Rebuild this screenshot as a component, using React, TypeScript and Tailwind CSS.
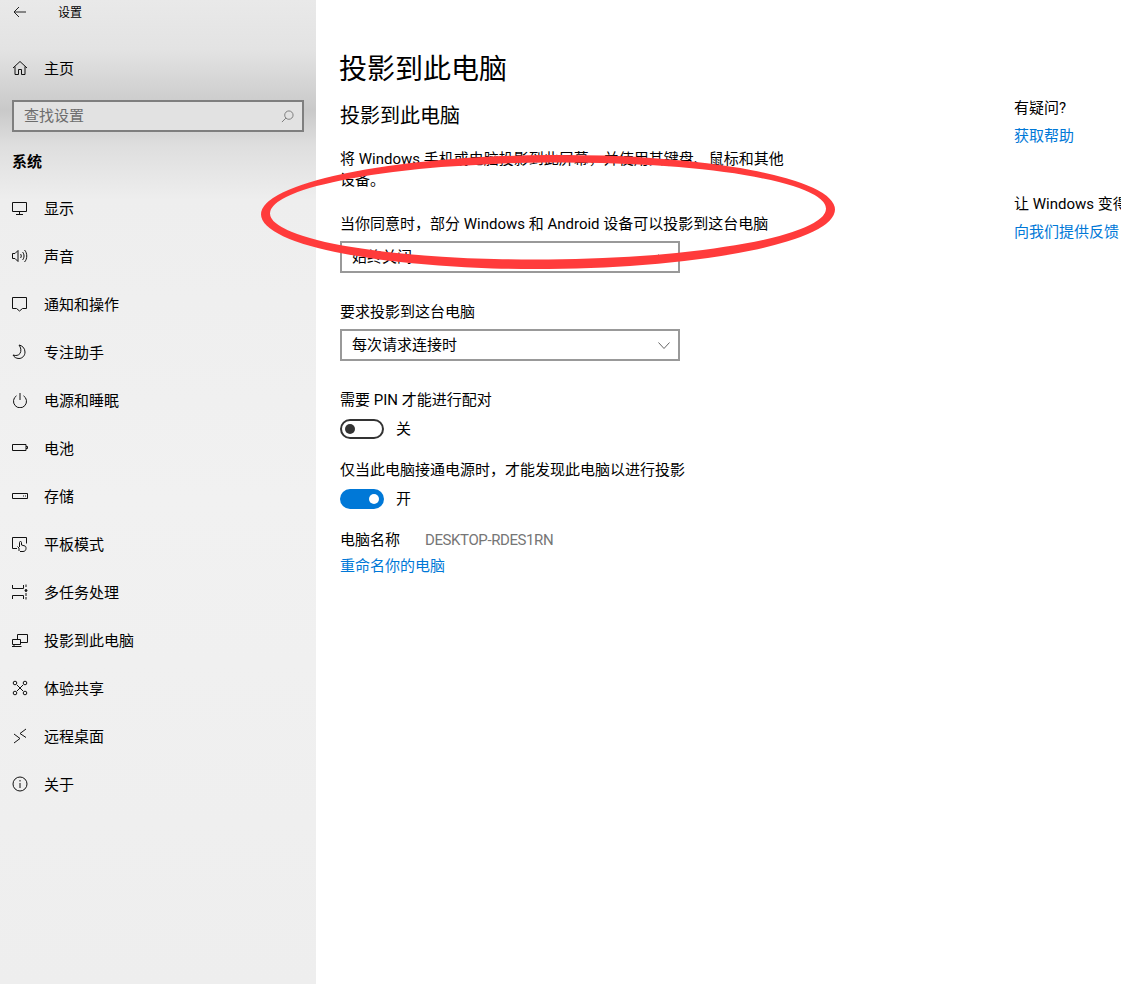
import React from "react";

const font = "font-['Roboto','Noto_Sans_CJK_SC',sans-serif]";

function Icon({ d, children }: { d?: string; children?: React.ReactNode }) {
  return (
    <svg viewBox="0 0 16 16" className="w-4 h-4 shrink-0" fill="none" stroke="#111" strokeWidth="1">
      {d && <path d={d} />}
      {children}
    </svg>
  );
}

const navItems: { label: string; icon: React.ReactNode }[] = [
  { label: "显示", icon: <Icon d="M.5 2.500h14v9H.5zM7.500 11.500v3M4 14.500h7" /> },
  { label: "声音", icon: <Icon d="M.5 5.500h2.500l3-3v11l-3-3H.5zM8.500 6c1 1 1 3 0 4M10.500 4c2 2 2 6 0 8M12.500 2c3 3 3 9 0 12" /> },
  { label: "通知和操作", icon: <Icon d="M.5 1.500h14v11h-4l-3 2.500-3-2.500h-4z" /> },
  { label: "专注助手", icon: <Icon d="M7 1c3 .5 6 3 6 7 0 4-3 6.500-6 6.500-3 0-5-1.500-6-3.500 3 1 5.500.5 7-1.500 1.500-2.500 1-6-1-8.500z" /> },
  { label: "电源和睡眠", icon: <Icon d="M8 1v7M4.500 3.800a6.500 6.500 0 1 0 7 0" /> },
  { label: "电池", icon: <Icon d="M.5 4.500h13.500v6H.5zM14 6.500h1.500v2H14" /> },
  { label: "存储", icon: <Icon d="M.5 5.500h15v5H.5zM11 8h1M13 8h1" /> },
  { label: "平板模式", icon: <Icon d="M5 12.500H.5v-11h14v6M7 15v-3L5.500 10.500M7.500 11V6.500a1 1 0 0 1 2 0V9l3.500 1c1 .5 1 1.500 1 2.500 0 1.500-1 3-3 3H8" /> },
  { label: "多任务处理", icon: <Icon d="M.5 1v3.500h11V1M.5 15v-3.500h11V15M14 .5v2.500M14 13v2.500M14 9v3"><circle cx="14" cy="6.500" r="1" fill="#111" /></Icon> },
  { label: "投影到此电脑", icon: <Icon d="M5.500 7V2.500h10v8H9M.5 7.500h8v5h-8zM0 14.500h9.500M2 12.500v2" /> },
  { label: "体验共享", icon: <Icon d="M5 5l6 6M11 5l-6 6"><circle cx="3" cy="3" r="1.800" /><circle cx="13" cy="3" r="1.800" /><circle cx="3" cy="13" r="1.800" /><circle cx="13" cy="13" r="1.800" /></Icon> },
  { label: "远程桌面", icon: <Icon d="M2 6l6 4.500-6 4.500M14 1L8 5.500l6 4" /> },
  { label: "关于", icon: <Icon d="M8 7v5M8 4v1.500"><circle cx="8" cy="8" r="7" /></Icon> },
];

function Select({ value }: { value: string }) {
  return (
    <div className="w-[340px] h-8 border-2 border-[#999] bg-white flex items-center justify-between pl-[10px] pr-2">
      <span className="text-[15px] text-black">{value}</span>
      <svg viewBox="0 0 12 7" className="w-3 h-[7px]" fill="none" stroke="#666" strokeWidth="1">
        <path d="M.5.5 6 6.500 11.500.5" />
      </svg>
    </div>
  );
}

function Toggle({ on }: { on: boolean }) {
  return (
    <div className="flex items-center gap-3 h-5">
      <div
        className={
          on
            ? "w-11 h-5 rounded-full bg-[#0078d7] flex items-center justify-end px-[5px]"
            : "w-11 h-5 rounded-full border-2 border-[#333] flex items-center justify-start px-[3px]"
        }
      >
        <div className={on ? "w-[10px] h-[10px] rounded-full bg-white" : "w-[10px] h-[10px] rounded-full bg-[#333]"} />
      </div>
      <span className="text-[15px] leading-5 text-black">{on ? "开" : "关"}</span>
    </div>
  );
}

export default function App() {
  return (
    <div className={`${font} relative flex w-full h-[984px] overflow-hidden bg-white text-black`}>
      {/* sidebar, blurred acrylic look */}
      <div className="w-[316px] shrink-0 bg-[linear-gradient(180deg,#e9e9e9_0px,#e3e3e3_50px,#c9c9c9_110px,#dedede_145px,#eeeeee_200px,#f1f1f1_500px,#eeeeee_984px)]">
        <div className="h-6 pt-[2px] flex items-center">
          <svg viewBox="0 0 14 12" className="w-[14px] h-3 ml-[13px] -mt-[2px]" fill="none" stroke="#222" strokeWidth="1">
            <path d="M13 6H1M6 1 1 6l5 5" />
          </svg>
          <span className="ml-[31px] text-xs">设置</span>
        </div>
        <div className="h-12 mt-5 flex items-center gap-4 pl-3">
          <Icon d="M1 8 8 1.500 15 8M3 6.500V14.500h3.500V9.500h3v5H13V6.500" />
          <span className="pt-[2px] text-[15px]">主页</span>
        </div>
        <div className="mx-3 mt-2 h-8 border-2 border-[#7f7f7f] flex items-center justify-between pl-[10px] pr-2 bg-[#e2e2e2]">
          <span className="text-[15px] text-[#6d6d6d]">查找设置</span>
          <svg viewBox="0 0 14 14" className="w-[13px] h-[13px]" fill="none" stroke="#777" strokeWidth="1">
            <circle cx="8.500" cy="5.500" r="4.500" />
            <path d="M5.300 8.700 1 13" />
          </svg>
        </div>
        <div className="mt-[15px] h-[30px] pl-3 flex items-center text-[15px] font-bold">系统</div>
        <div className="mt-[7px]">
          {navItems.map((item) => (
            <div key={item.label} className="h-12 flex items-center gap-4 pl-3">
              {item.icon}
              <span className="pt-[2px] text-[15px]">{item.label}</span>
            </div>
          ))}
        </div>
      </div>

      {/* main settings column */}
      <div className="w-[698px] shrink-0 pl-6 pt-[50px]">
        <h1 className="text-[28px] leading-10 -ml-px">投影到此电脑</h1>
        <h2 className="mt-[12px] text-xl leading-7">投影到此电脑</h2>
        <p className="mt-[19px] w-[450px] text-[15px] leading-[21px]">
          将 Windows 手机或电脑投影到此屏幕，并使用其键盘、鼠标和其他设备。
        </p>
        <div className="mt-[22px] pt-px text-[15px] leading-[21px]">当你同意时，部分 Windows 和 Android 设备可以投影到这台电脑</div>
        <div className="mt-[6px]">
          <Select value="始终关闭" />
        </div>
        <div className="mt-[28px] pt-px text-[15px] leading-[21px]">要求投影到这台电脑</div>
        <div className="mt-[6px]">
          <Select value="每次请求连接时" />
        </div>
        <div className="mt-[28px] pt-px text-[15px] leading-[21px]">需要 PIN 才能进行配对</div>
        <div className="mt-[8px]">
          <Toggle on={false} />
        </div>
        <div className="mt-5 pt-px text-[15px] leading-[21px]">仅当此电脑接通电源时，才能发现此电脑以进行投影</div>
        <div className="mt-[8px]">
          <Toggle on={true} />
        </div>
        <div className="mt-5 pt-px flex gap-[25px] text-[15px] leading-[21px]">
          <span>电脑名称</span>
          <span className="text-[#767676] tracking-[-0.4px]">DESKTOP-RDES1RN</span>
        </div>
        <div className="mt-[5px] text-[15px] leading-[21px] text-[#0078d7]">重命名你的电脑</div>
      </div>

      {/* right help column */}
      <div className="pt-[98px] text-[15px] leading-[21px] whitespace-nowrap">
        <div>有疑问?</div>
        <div className="mt-[7px] text-[#0078d7]">获取帮助</div>
        <div className="mt-[47px]">让 Windows 变得更好</div>
        <div className="mt-[7px] text-[#0078d7]">向我们提供反馈</div>
      </div>

      {/* red marker ring over the shot, a little heavier along the bottom */}
      <svg className="absolute left-0 top-0 w-[1121px] h-[984px] pointer-events-none" viewBox="0 0 1121 984">
        <path
          fill="#ff3b3b"
          fillRule="evenodd"
          transform="rotate(-0.5 548 211)"
          d="M261 212a287 57 0 1 0 574 0a287 57 0 1 0-574 0zM270 211a278 48.500 0 1 0 556 0a278 48.500 0 1 0-556 0z"
        />
      </svg>
    </div>
  );
}
